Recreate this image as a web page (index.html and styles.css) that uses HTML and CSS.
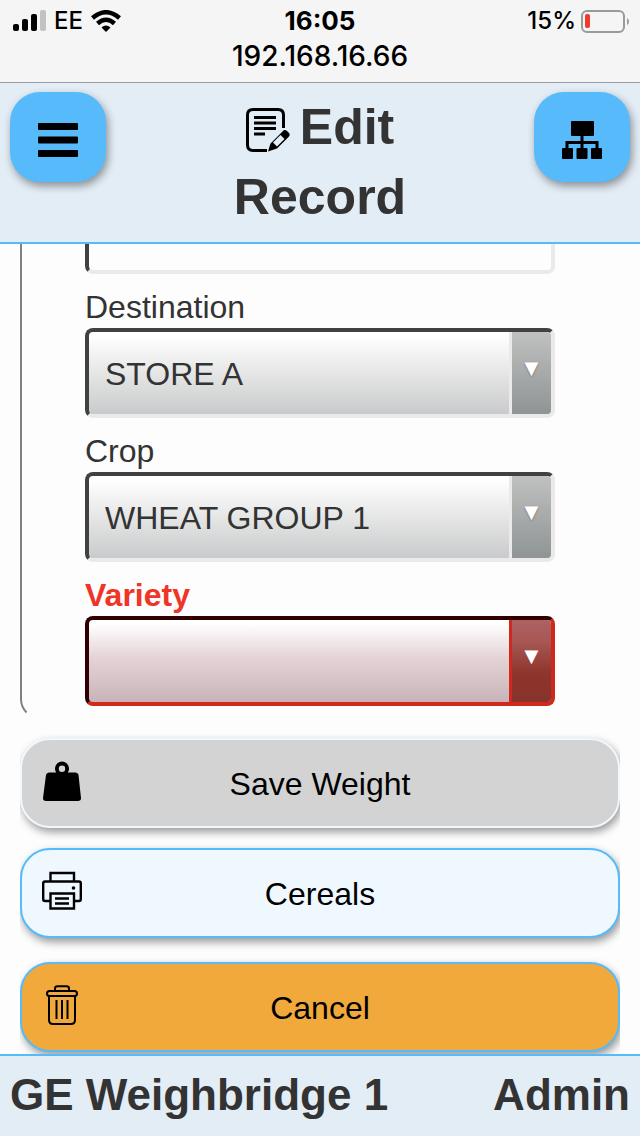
FILE: index.html
```html
<!DOCTYPE html>
<html lang="en">
<head>
<meta charset="utf-8">
<meta name="viewport" content="width=device-width, initial-scale=1">
<title>Edit Record</title>
<link rel="stylesheet" href="styles.css">
</head>
<body>
<div class="status">
  <div class="status-row">
    <div class="carrier">
      <svg class="signal" viewBox="0 0 33 22" aria-hidden="true">
        <rect x="0" y="14" width="6" height="7" rx="2"/>
        <rect x="9" y="9" width="6" height="12" rx="2"/>
        <rect x="18" y="4" width="6" height="17" rx="2"/>
        <rect x="27" y="0" width="6" height="21" rx="2" fill="#c2c2c2"/>
      </svg>
      <span>EE</span>
      <svg class="wifi" viewBox="0 0 30 22" aria-hidden="true">
        <path d="M1.500 8Q15 -3.500 28.500 8" fill="none" stroke="#000" stroke-width="4.500"/>
        <path d="M6.500 13.500Q15 6 23.500 13.500" fill="none" stroke="#000" stroke-width="4.500"/>
        <path d="M10.500 17.500Q15 13.500 19.500 17.500L15 22Z"/>
      </svg>
    </div>
    <time class="clock">16:05</time>
    <div class="power">
      <span>15%</span>
      <svg class="battery" viewBox="0 0 49 23" aria-hidden="true">
        <rect x="1" y="1" width="42" height="21" rx="5" fill="none" stroke="#979b9b" stroke-width="2"/>
        <rect x="4" y="4" width="5" height="14" rx="2" fill="#f03a2b"/>
        <path d="M46 8Q48 9 48 11.500T46 15Z" fill="#979b9b"/>
      </svg>
    </div>
  </div>
  <div class="address">192.168.16.66</div>
</div>

<header class="header">
  <button class="icon-button" type="button" aria-label="Menu">
    <svg viewBox="0 0 40 40" aria-hidden="true">
      <rect y="3" width="40" height="7" rx="1"/>
      <rect y="16.500" width="40" height="7" rx="1"/>
      <rect y="30" width="40" height="7" rx="1"/>
    </svg>
  </button>
  <h1 class="title"><svg class="title-icon" viewBox="0 0 44 44" aria-hidden="true">
      <path d="M21 42.500H7Q1.500 42.500 1.500 37V7Q1.500 1.500 7 1.500H32Q37.500 1.500 37.500 7V20" fill="none" stroke="#000" stroke-width="3"/>
      <path d="M8 9.500H30M8 15H30M8 20.500H30M8 26H19" fill="none" stroke="#000" stroke-width="2.800"/>
      <path d="M36.500 23.500Q38.500 21 41 23L43 25Q44.500 27 42.500 29L31 40.500L22 43.500L24.500 35.500Z"/>
      <path d="M34.500 27L38.500 31L31 38.500L27 34.500Z" fill="#e3edf6"/>
    </svg>Edit Record</h1>
  <button class="icon-button" type="button" aria-label="Site map">
    <svg viewBox="0 0 40 40" aria-hidden="true">
      <rect x="9" y="1" width="23" height="15" rx="1"/>
      <path d="M20 15V29M5 29V22.500H35V29" fill="none" stroke="#000" stroke-width="3"/>
      <rect x="0" y="28" width="11" height="11" rx="1"/>
      <rect x="14.500" y="28" width="11" height="11" rx="1"/>
      <rect x="29" y="28" width="11" height="11" rx="1"/>
    </svg>
  </button>
</header>

<main class="content">
  <form class="form">
    <fieldset class="fields">
      <input class="text-box" type="text" aria-label="Text">

      <label class="label" for="destination">Destination</label>
      <div class="picker">
        <select class="select" id="destination"><option>STORE A</option></select>
      </div>

      <label class="label" for="crop">Crop</label>
      <div class="picker">
        <select class="select" id="crop"><option>WHEAT GROUP 1</option></select>
      </div>

      <label class="label label-error" for="variety">Variety</label>
      <div class="picker picker-error">
        <select class="select" id="variety" aria-invalid="true"><option></option></select>
      </div>
    </fieldset>

    <div class="actions">
      <button class="action action-save" type="button">
        <svg viewBox="0 0 40 40" aria-hidden="true">
          <path fill-rule="evenodd" d="M14.200 11.500A7 7 0 1 1 25.800 11.500H33Q36 11.500 36.500 14L39 37Q39.200 40 36 40H4Q.800 40 1 37L4 14Q4.500 11.500 7 11.500ZM20 4.500A3.200 3.200 0 1 0 20 10.900A3.200 3.200 0 1 0 20 4.500Z"/>
        </svg>
        <span>Save Weight</span>
      </button>
      <button class="action action-print" type="button">
        <svg viewBox="0 0 40 40" fill="none" stroke="#000" stroke-width="2.400" aria-hidden="true">
          <path d="M8.500 10.500V2H32V10.500M8 30H3Q1.200 30 1.200 28V12.500Q1.200 10.500 3 10.500H37Q38.800 10.500 38.800 12.500V28Q38.800 30 37 30H32"/>
          <path d="M8.500 22.500H32V37.500H8.500ZM13 27.500H27M13 32.500H27"/>
          <circle cx="31.500" cy="17" r="1.800" fill="#000" stroke="none"/>
        </svg>
        <span>Cereals</span>
      </button>
      <button class="action action-cancel" type="button">
        <svg viewBox="0 0 40 40" fill="none" stroke="#000" stroke-width="2" aria-hidden="true">
          <rect x="5" y="6" width="30" height="5" rx="2.500"/>
          <path d="M13 6V3.500Q13 1.200 15.500 1.200H24.500Q27 1.200 27 3.500V6M7 11V35Q7 39 11 39H29Q33 39 33 35V11M14.500 15V34M20 15V34M25.500 15V34"/>
        </svg>
        <span>Cancel</span>
      </button>
    </div>
  </form>
</main>

<footer class="footer">
  <span>GE Weighbridge 1</span>
  <span>Admin</span>
</footer>
</body>
</html>
```
FILE: styles.css
```css
* {
  box-sizing: border-box;
}

body {
  display: flex;
  flex-direction: column;
  height: 100vh;
  margin: 0;
  background: #fdfdfd;
  color: #333;
  font-family: "Liberation Sans", Arial, sans-serif;
  font-size: 32px;
}

svg {
  display: block;
  flex: none;
}

button,
input,
select {
  font: inherit;
}

/* Phone status bar */
.status {
  flex: none;
  padding: 5px 10px 10px;
  border-bottom: 1px solid #9b9da0;
  background: #f5f5f5;
  color: #000;
  font-family: Inter, Roboto, sans-serif;
  font-size: 24px;
  font-weight: 500;
  line-height: 32px;
}

.status-row {
  display: grid;
  grid-template-columns: 1fr auto 1fr;
  align-items: center;
}

.carrier,
.power {
  display: flex;
  align-items: center;
  gap: 8px;
}

.carrier {
  padding-left: 3px;
}

.power {
  justify-content: flex-end;
  gap: 5px;
}

.signal {
  width: 33px;
  height: 22px;
}

.wifi {
  width: 30px;
  height: 22px;
}

.battery {
  width: 49px;
  height: 23px;
}

.clock {
  font-size: 26px;
  font-weight: 700;
}

.address {
  padding-top: 3px;
  font-size: 28px;
  text-align: center;
}

/* Page header */
.header {
  display: flex;
  flex: none;
  align-items: flex-start;
  justify-content: space-between;
  padding: 9px 10px 10px;
  border-bottom: 2px solid #55bbf9;
  background: #e3edf6;
}

.icon-button {
  display: flex;
  justify-content: center;
  width: 96px;
  height: 90px;
  padding: 28px 0 0;
  border: 0;
  border-radius: 30px;
  background: #57bbfb;
  box-shadow: 2px 4px 8px rgba(0, 0, 0, 0.4);
}

.icon-button svg {
  width: 40px;
  height: 40px;
}

.title {
  width: 40%;
  margin: 0;
  font-size: 50px;
  line-height: 70px;
  text-align: center;
}

.title-icon {
  display: inline-block;
  width: 44px;
  height: 44px;
  margin-right: 10px;
  vertical-align: -8px;
}

/* Scrolled form */
.content {
  display: flex;
  flex: 1;
  flex-direction: column;
  justify-content: flex-end;
  min-height: 0;
  overflow: hidden;
  padding: 0 20px 2px;
}

.fields {
  min-width: 0;
  margin: 0 0 19px;
  padding: 0 65px 11px 63px;
  border: 0 solid transparent;
  border-width: 0 0 2px 2px;
  border-left-color: #808080;
  border-radius: 0 0 0 20px;
}

.text-box {
  display: block;
  width: 100%;
  height: 90px;
  padding: 4px 16px 0;
  border: 4px solid;
  border-color: #404242 #ebe9ea #ebe9ea #404242;
  border-radius: 8px;
  background: #fdfdfd;
  color: #333;
}

.label {
  display: block;
  padding: 15px 0 3px;
  line-height: 36px;
}

.label-error {
  color: #ee3528;
  font-weight: 700;
}

.picker {
  display: grid;
  grid-template-columns: 1fr 42px;
  height: 90px;
  overflow: hidden;
  border: 4px solid;
  border-color: #404242 #ebe9ea #ebe9ea #404242;
  border-radius: 8px;
  background: linear-gradient(#fff 5%, #c9cacb);
}

.select {
  grid-area: 1 / 1 / 2 / 3;
  padding: 2px 58px 0 16px;
  border: 0;
  appearance: none;
  background: none;
  color: #333;
}

.picker::after {
  display: grid;
  grid-area: 1 / 2 / 2 / 3;
  place-content: center;
  padding-bottom: 12px;
  border-left: 3px solid #ebe9ea;
  background: linear-gradient(#c0c0c0, #8f9494);
  color: #fff;
  content: "\25BC";
  font-family: "DejaVu Sans", sans-serif;
  font-size: 18px;
  pointer-events: none;
  text-shadow: 0 1px 2px #777;
}

.picker-error {
  border-color: #300000 #d0281c #d0281c #300000;
  background: linear-gradient(#fff 5%, #e5d4d7 45%, #c8b4b8);
}

.picker-error::after {
  border-left-color: #d0281c;
  background: linear-gradient(#ad6262, #a85855 25%, #8e352c 65%, #86332c);
  text-shadow: none;
}

/* Form actions */
.actions {
  display: grid;
  gap: 20px;
  overflow-x: clip;
  overflow-y: visible;
}

.action {
  display: grid;
  grid-template-columns: 40px 1fr 40px;
  align-items: center;
  height: 90px;
  padding: 2px 20px 0;
  border: 2px solid #55bbf9;
  border-radius: 30px;
  box-shadow: 2px 4px 8px rgba(0, 0, 0, 0.4);
  color: #000;
}

.action svg {
  width: 40px;
  height: 40px;
  margin-bottom: 6px;
}

.action-save {
  border-color: #f0f8ff;
  background: #d3d3d3;
}

.action-print {
  margin-bottom: 4px;
  background: #f0f8ff;
}

.action-cancel {
  background: #f1a93b;
}

/* Page footer */
.footer {
  display: flex;
  flex: none;
  justify-content: space-between;
  padding: 9px 10px 11px;
  border-top: 2px solid #55bbf9;
  background: #e3edf6;
  font-size: 44px;
  font-weight: 700;
  line-height: 60px;
}
```
